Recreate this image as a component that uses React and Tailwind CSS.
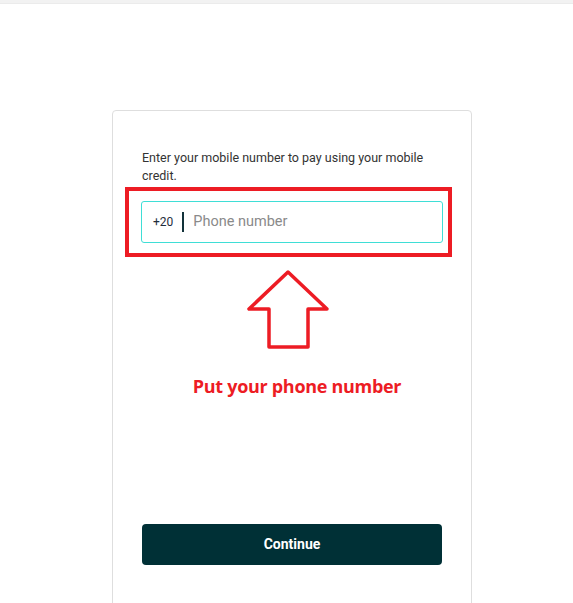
import React from 'react';

const UpArrow = () => (
  <svg width="84" height="80" viewBox="0 0 84 80" className="block">
    {/* hollow arrow, drawn over the screenshot */}
    <polygon
      points="42,3 3,40 23,40 23,78 62,78 62,40 81,40"
      fill="none"
      stroke="#ed1c24"
      strokeWidth="3.5"
      strokeLinejoin="round"
    />
  </svg>
);

const App = () => {
  return (
    <div className="w-[573px] h-[603px] overflow-hidden bg-white font-['Roboto',sans-serif]">
      {/* Top strip */}
      <div className="h-[4px] bg-[#f2f2f2] border-b border-[#ebebeb]" />

      <div className="flex justify-center pt-[106px]">
        <div className="w-[360px] h-[520px] ml-[11px] border border-[#dedede] rounded-[4px] px-[29px] pt-[38px]">
          <p className="text-[12.5px] leading-[18px] text-[#333]">
            Enter your mobile number to pay using your mobile credit.
          </p>

          {/* Highlighted input */}
          <div className="mt-[2px] -ml-[17px] -mr-[10px] border-4 border-[#ed1c24] pl-[12px] pr-[5px] py-[10px]">
            <div className="h-[42px] flex items-center border border-[#3fded6] rounded-[3px] bg-white">
              <span className="pl-[11px] text-[12px] text-[#1f2d3d]">+20</span>
              <span className="ml-[9px] w-[2px] h-[20px] bg-[#12323a]" />
              <span className="ml-[9px] text-[14.5px] text-[#8a8a8a]">Phone number</span>
            </div>
          </div>

          {/* Annotation */}
          <div className="flex flex-col items-center mt-[12px] -ml-[8px]">
            <UpArrow />
            <div className="mt-[24px] ml-[18px] text-[18px] font-bold text-[#ed1c24] font-['Open_Sans',sans-serif] tracking-[-0.3px]">
              Put your phone number
            </div>
          </div>

          <button className="mt-[124px] w-[300px] h-[41px] rounded-[4px] bg-[#003036] text-white text-[14px] font-bold">
            Continue
          </button>
        </div>
      </div>
    </div>
  );
};

export default App;
